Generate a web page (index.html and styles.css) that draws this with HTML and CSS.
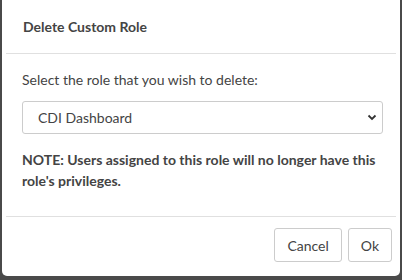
FILE: index.html
```html
<!DOCTYPE html>
<html lang="en">
<head>
    <meta charset="UTF-8">
    <meta name="viewport" content="width=device-width, initial-scale=1.0">
    <title>Delete Custom Role</title>
    <link rel="stylesheet" href="styles.css">
</head>
<body>
    <div class="modal">
        <div class="modal-header">
            <h4 class="modal-title">Delete Custom Role</h4>
        </div>
        <div class="modal-body">
            <p class="prompt">Select the role that you wish to delete:</p>
            <div class="select-box">
                <span>CDI Dashboard</span>
                <svg class="chevron" width="10" height="7" viewBox="0 0 10 7">
                    <path d="M1.5 1.5 L5 5 L8.5 1.5" fill="none" stroke="#333" stroke-width="1.8"/>
                </svg>
            </div>
            <p class="note">NOTE: Users assigned to this role will no longer have this role's privileges.</p>
        </div>
        <div class="modal-footer">
            <button class="btn">Cancel</button>
            <button class="btn">Ok</button>
        </div>
    </div>
</body>
</html>
```
FILE: styles.css
```css
body {
    margin: 0;
    padding: 0;
    background-color: #4a4a4a;
    font-family: Lato, "Open Sans", sans-serif;
    color: #444;
    height: 280px;
    overflow: hidden;
}

.modal {
    width: 398px;
    margin: -6px 0 0 2px;
    background: white;
    border-radius: 5px;
}

.modal-header {
    margin: 0 4px;
    height: 60px;
    box-sizing: border-box;
    padding: 24px 0 0 17px;
    border-bottom: 1px solid #e0e0e0;
}

.modal-title {
    margin: 0;
    font-size: 14px;
    font-weight: bold;
    color: #444;
}

.modal-body {
    margin: 0 4px;
    height: 163px;
    box-sizing: border-box;
    padding: 17px 13px 0 16px;
    border-bottom: 1px solid #e0e0e0;
}

.prompt {
    margin: 0 0 13px 0;
    font-size: 14px;
}

.select-box {
    display: flex;
    align-items: center;
    justify-content: space-between;
    height: 33px;
    box-sizing: border-box;
    border: 1px solid #ccc;
    border-radius: 3px;
    padding: 0 5px 0 15px;
    font-size: 14px;
    color: #444;
}

.note {
    margin: 15px 0 0 0;
    font-size: 14px;
    font-weight: bold;
    line-height: 21px;
}

.modal-footer {
    display: flex;
    justify-content: flex-end;
    gap: 6px;
    padding: 11px 8px 14px 0;
}

.btn {
    font-family: Lato, "Open Sans", sans-serif;
    font-size: 14px;
    color: #444;
    background: white;
    border: 1px solid #ccc;
    border-radius: 3px;
    height: 34px;
    padding: 0 12px;
}
```
